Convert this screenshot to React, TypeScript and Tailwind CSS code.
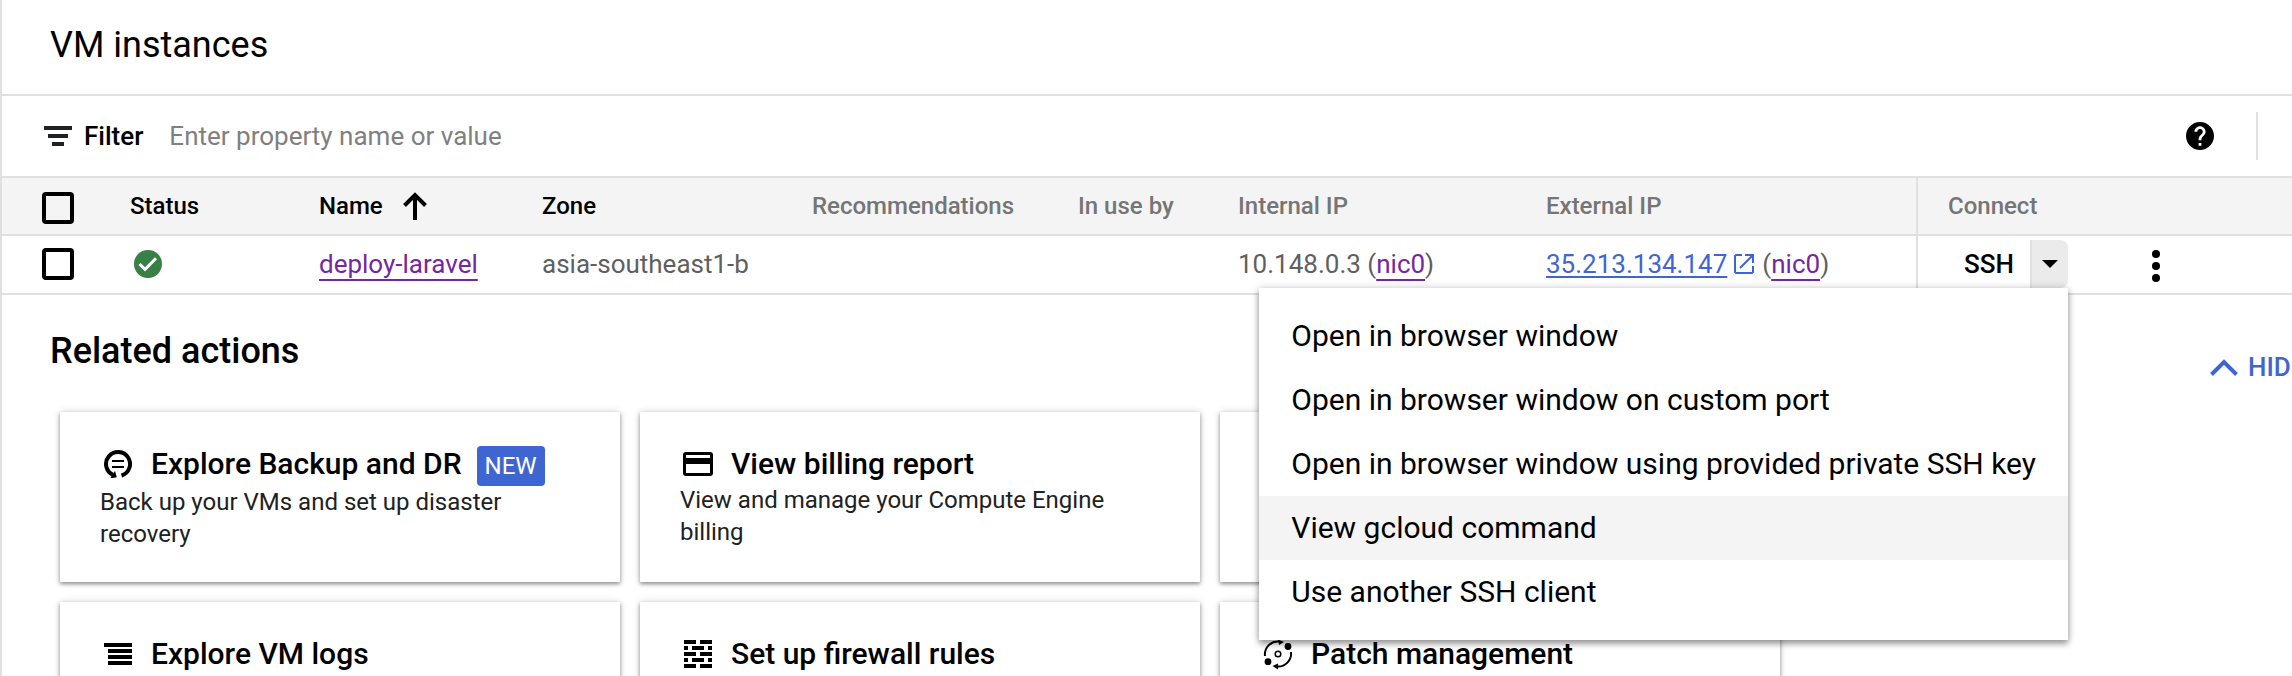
import type { ReactNode } from "react";

function FilterIcon() {
  return (
    <svg width="28" height="20" viewBox="0 0 28 20" fill="#202124" aria-hidden="true">
      <path d="M0 0h28v4H0zM4 8h20v4H4zM8 16h12v4H8z" />
    </svg>
  );
}

function ArrowUpIcon() {
  return (
    <svg width="24" height="28" viewBox="0 0 24 28" fill="none" stroke="#000" strokeWidth="4" aria-hidden="true">
      <path d="M12 28V3M1.500 13.500 12 3l10.500 10.500" />
    </svg>
  );
}

function HelpIcon() {
  return (
    <svg width="28" height="28" viewBox="2 2 20 20" aria-hidden="true">
      <path d="M12 2C6.480 2 2 6.480 2 12s4.480 10 10 10 10-4.480 10-10S17.520 2 12 2zm1 17h-2v-2h2v2zm2.070-7.750-.9.920C13.450 12.900 13 13.500 13 15h-2v-.5c0-1.100.45-2.100 1.170-2.830l1.240-1.260c.37-.36.59-.86.59-1.410 0-1.100-.9-2-2-2s-2 .9-2 2H8c0-2.210 1.790-4 4-4s4 1.790 4 4c0 .88-.36 1.680-.93 2.250z" />
    </svg>
  );
}

function StatusIcon() {
  return (
    <svg width="28" height="28" viewBox="0 0 28 28" role="img" aria-label="Running">
      <circle cx="14" cy="14" r="14" fill="#388046" />
      <path d="M5.500 14l5.500 5.300L22 8.300" fill="none" stroke="#fff" strokeWidth="3" />
    </svg>
  );
}

function ExternalIcon() {
  return (
    <svg width="20" height="20" viewBox="0 0 20 20" fill="none" stroke="#3f66d0" strokeWidth="2" aria-hidden="true">
      <path d="M8 1H2L1 2v16l1 1h16l1-1v-6M11 1h8v8M19 1 6 14" />
    </svg>
  );
}

function BackupIcon() {
  return (
    <svg width="28" height="28" viewBox="0 0 28 28" fill="none" stroke="#000" aria-hidden="true">
      <path d="M9 24.900A12 12 0 1 1 17.500 25.500" strokeWidth="4" />
      <path d="M8 11h12M8 17h12" strokeWidth="2" />
      <path d="M11 21l1.800 6.200L6 28.500z" fill="#000" stroke="none" />
    </svg>
  );
}

function CardIcon() {
  return (
    <svg width="30" height="24" viewBox="0 0 30 24" aria-hidden="true">
      <rect x="1.500" y="1.500" width="27" height="21" rx="1.500" fill="none" stroke="#000" strokeWidth="3" />
      <path d="M1 6h28v6H1z" />
    </svg>
  );
}

function LogsIcon() {
  return (
    <svg width="28" height="22" viewBox="0 0 28 22" aria-hidden="true">
      <path d="M0 0h28v4H0zM4 6h24v4H4zM4 12h24v4H4zM4 18h24v4H4z" />
    </svg>
  );
}

function FirewallIcon() {
  return (
    <svg width="28" height="28" viewBox="0 0 28 28" aria-hidden="true">
      <path d="M0 0h12v4H0zM16 0h12v4H16zM0 6h4v4H0zM8 6h12v4H8zM24 6h4v4h-4zM0 12h12v4H0zM16 12h12v4H16zM0 18h4v4H0zM8 18h12v4H8zM24 18h4v4h-4zM0 24h12v4H0zM16 24h12v4H16z" />
    </svg>
  );
}

function PatchIcon() {
  return (
    <svg
      width="28"
      height="28"
      viewBox="0 0 28 28"
      fill="none"
      stroke="#000"
      strokeWidth="2"
      className="overflow-visible"
      aria-hidden="true"
    >
      <path d="M1 16A13 13 0 0 1 15 1.500M27 12A13 13 0 0 1 13 26.500" />
      <circle cx="14" cy="14" r="2.800" strokeWidth="1.500" />
      <path d="M14-.5l6 2.500-5 3zM14 23.500v6L8.500 26z" fill="#000" stroke="none" />
      <circle cx="24" cy="6.500" r="3.400" fill="#000" stroke="none" />
      <circle cx="4" cy="21.700" r="3.400" fill="#000" stroke="none" />
    </svg>
  );
}

function ChevronUpIcon() {
  return (
    <svg
      width="28"
      height="17"
      viewBox="0 0 28 17"
      fill="none"
      stroke="#3f66d0"
      strokeWidth="4"
      className="shrink-0"
      aria-hidden="true"
    >
      <path d="M1.500 15.500 14 3l12.500 12.500" />
    </svg>
  );
}

function Check({ label }: { label: string }) {
  return (
    <input
      type="checkbox"
      aria-label={label}
      className="block size-8 appearance-none rounded-[4px] border-4 border-black bg-transparent"
    />
  );
}

function VisitedLink({ children }: { children: string }) {
  return (
    <a
      href={`#${children}`}
      className="text-[#7527a0] underline decoration-2 underline-offset-[6px] [text-decoration-skip-ink:none]"
    >
      {children}
    </a>
  );
}

type CardProps = { icon?: ReactNode; title?: string; text?: string; isNew?: boolean };

function ActionCard({ icon, title, text, isNew }: CardProps) {
  return (
    <a
      href="#action"
      className="block h-[170px] bg-white px-10 pt-8 shadow-[0_2px_4px_rgba(0,0,0,0.4),0_0_8px_rgba(0,0,0,0.14)]"
    >
      {title && (
        <div className="flex items-start">
          <span className="mr-[15px] flex h-10 w-9 items-center justify-center">{icon}</span>
          <h3 className="text-[30px] leading-10 font-medium">{title}</h3>
          {isNew && (
            <span className="mt-[2px] ml-[15px] rounded-[4px] bg-[#3f66d0] px-2 text-2xl leading-10 text-white">
              NEW
            </span>
          )}
        </div>
      )}
      {text && <p className="text-2xl leading-8 text-[#212121]">{text}</p>}
    </a>
  );
}

const cards: CardProps[] = [
  { icon: <BackupIcon />, title: "Explore Backup and DR", text: "Back up your VMs and set up disaster recovery", isNew: true },
  { icon: <CardIcon />, title: "View billing report", text: "View and manage your Compute Engine billing" },
  {},
  { icon: <LogsIcon />, title: "Explore VM logs" },
  { icon: <FirewallIcon />, title: "Set up firewall rules" },
  { icon: <PatchIcon />, title: "Patch management" },
];

const menuItems = [
  "Open in browser window",
  "Open in browser window on custom port",
  "Open in browser window using provided private SSH key",
  "View gcloud command",
  "Use another SSH client",
];

function SshMenu() {
  return (
    <ul
      role="menu"
      className="absolute top-full right-0 z-10 bg-white py-4 shadow-[0_4px_6px_rgba(0,0,0,0.35),0_0_8px_rgba(0,0,0,0.18)]"
    >
      {menuItems.map((item) => (
        <li key={item} role="none">
          <button
            type="button"
            role="menuitem"
            className={
              item === "View gcloud command"
                ? "block h-16 w-full bg-[#f4f4f4] px-8 text-left text-[30px] whitespace-nowrap"
                : "block h-16 w-full px-8 text-left text-[30px] whitespace-nowrap"
            }
          >
            {item}
          </button>
        </li>
      ))}
    </ul>
  );
}

export default function App() {
  return (
    <main className="h-screen overflow-hidden border-l-2 border-[#e0e0e0] bg-white font-['Roboto',sans-serif] text-black">
      <header className="flex h-24 items-center border-b-2 border-[#e0e0e0] px-12 pb-1">
        <h1 className="text-4xl">VM instances</h1>
      </header>

      <div className="flex h-[82px] items-center border-b-2 border-[#e0e0e0] pl-[42px] text-[26px]">
        <FilterIcon />
        <label htmlFor="filter" className="ml-3 font-medium">
          Filter
        </label>
        <input
          id="filter"
          type="text"
          placeholder="Enter property name or value"
          className="ml-[26px] min-w-0 flex-1 outline-none placeholder:text-[#808080]"
        />
        <button type="button" aria-label="Help" className="mr-[42px]">
          <HelpIcon />
        </button>
        <span className="mr-[34px] h-12 w-[2px] bg-[#e0e0e0]" />
      </div>

      <table cellPadding={0} className="w-full table-fixed border-separate border-spacing-0 text-left">
        <colgroup>
          <col className="w-[128px]" />
          <col className="w-[189px]" />
          <col className="w-[223px]" />
          <col className="w-[270px]" />
          <col className="w-[266px]" />
          <col className="w-[160px]" />
          <col className="w-[308px]" />
          <col className="w-[370px]" />
          <col />
        </colgroup>
        <thead>
          <tr className="h-[58px] bg-[#f4f4f4] text-2xl text-[#757575] [&>th]:border-b-2 [&>th]:border-[#e0e0e0]">
            <th className="pt-1 pl-10">
              <Check label="Select all instances" />
            </th>
            <th className="font-medium text-black">Status</th>
            <th className="font-medium text-black">
              <button type="button" className="flex items-center gap-5">
                Name
                <ArrowUpIcon />
              </button>
            </th>
            <th className="font-medium text-black">Zone</th>
            <th className="font-medium">Recommendations</th>
            <th className="font-medium">In use by</th>
            <th className="font-medium">Internal IP</th>
            <th className="font-medium">External IP</th>
            <th className="border-l-2 pl-[30px] font-medium">Connect</th>
          </tr>
        </thead>
        <tbody>
          <tr className="h-[59px] text-[26px] leading-8 whitespace-nowrap text-[#5f5f5f] [&>td]:border-b-2 [&>td]:border-[#e0e0e0] [&>td]:pb-px">
            <td className="pl-10">
              <Check label="Select deploy-laravel" />
            </td>
            <td className="pl-1">
              <StatusIcon />
            </td>
            <td>
              <VisitedLink>deploy-laravel</VisitedLink>
            </td>
            <td>asia-southeast1-b</td>
            <td />
            <td />
            <td>
              10.148.0.3 (<VisitedLink>nic0</VisitedLink>)
            </td>
            <td>
              <span className="flex items-center">
                <a href="#ip" className="flex items-center gap-[7px] text-[#3f66d0]">
                  <span className="underline decoration-2 underline-offset-[3px]">35.213.134.147</span>
                  <ExternalIcon />
                </a>
                <span className="ml-2">
                  (<VisitedLink>nic0</VisitedLink>)
                </span>
              </span>
            </td>
            <td className="border-l-2 pl-[30px] text-black">
              <div className="flex items-center">
                <div className="relative flex h-12 items-center">
                  <button type="button" className="h-12 w-[82px] font-medium">
                    SSH
                  </button>
                  <button
                    type="button"
                    aria-label="SSH options"
                    className="flex h-12 w-[38px] items-center justify-center rounded-r-lg border-l-2 border-[#e0e0e0] bg-[#ebebeb]"
                  >
                    <svg width="16" height="8" viewBox="0 0 16 8" aria-hidden="true">
                      <path d="M0 0h16L8 8z" />
                    </svg>
                  </button>
                  <SshMenu />
                </div>
                <button type="button" aria-label="More actions" className="ml-[84px] pt-1">
                  <svg width="8" height="32" viewBox="0 0 8 32" aria-hidden="true">
                    <circle cx="4" cy="4" r="4" />
                    <circle cx="4" cy="16" r="4" />
                    <circle cx="4" cy="28" r="4" />
                  </svg>
                </button>
              </div>
            </td>
          </tr>
        </tbody>
      </table>

      <section className="pt-8 pl-12">
        <div className="flex items-start justify-between">
          <h2 className="text-4xl leading-12 font-medium">Related actions</h2>
          <button
            type="button"
            className="flex w-[82px] items-center gap-[10px] pt-6 text-[26px] leading-8 font-medium whitespace-nowrap text-[#3f66d0]"
          >
            <ChevronUpIcon />
            HIDE
          </button>
        </div>
        <div className="mt-[29px] grid grid-cols-[repeat(3,560px)] gap-5 pl-[10px]">
          {cards.map((card, index) => (
            <ActionCard key={index} {...card} />
          ))}
        </div>
      </section>
    </main>
  );
}
